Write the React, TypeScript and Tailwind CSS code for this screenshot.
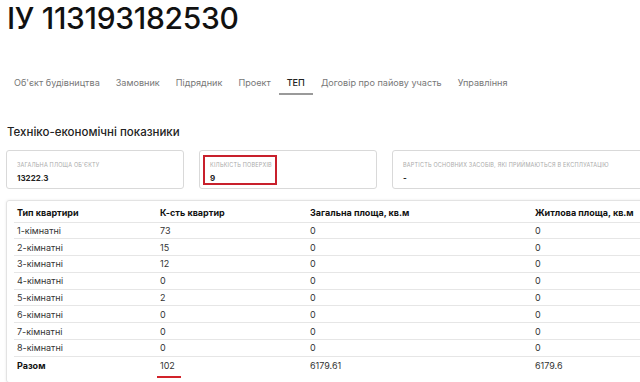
import React from "react";

const TABS = [
  "Об'єкт будівництва",
  "Замовник",
  "Підрядник",
  "Проект",
  "ТЕП",
  "Договір про пайову участь",
  "Управління",
];

const ROWS: [string, string, string, string][] = [
  ["1-кімнатні", "73", "0", "0"],
  ["2-кімнатні", "15", "0", "0"],
  ["3-кімнатні", "12", "0", "0"],
  ["4-кімнатні", "0", "0", "0"],
  ["5-кімнатні", "2", "0", "0"],
  ["6-кімнатні", "0", "0", "0"],
  ["7-кімнатні", "0", "0", "0"],
  ["8-кімнатні", "0", "0", "0"],
];

export default function App() {
  return (
    <div className="w-[640px] h-[382px] overflow-hidden bg-white font-['Inter',sans-serif] text-[#222]">
      <div className="w-[820px] pl-[6px]">
        <h1 className="text-[30px] leading-[36px] font-medium tracking-[-0.3px] text-[#111] pl-[1px]">
          ІУ 113193182530
        </h1>

        <nav className="flex mt-[36px] h-[23px]">
          {TABS.map((t) => (
            <div
              key={t}
              className={
                "px-[8px] text-[9.1px] leading-[21px] whitespace-nowrap " +
                (t === "ТЕП"
                  ? "text-[#222] font-medium border-b-2 border-[#9a9a9a]"
                  : "text-[#777]")
              }
            >
              {t}
            </div>
          ))}
        </nav>

        <h2 className="mt-[29px] text-[11.5px] leading-[16px] font-medium text-[#222] pl-[1px]">
          Техніко-економічні показники
        </h2>

        <div className="flex gap-[15px] mt-[10px]">
          <Card label="Загальна площа об'єкту" value="13222.3" className="w-[178px]" />
          <Card label="Кількість поверхів" value="9" className="w-[178px]" highlight />
          <Card
            label="Вартість основних засобів, які приймаються в експлуатацію"
            value="-"
            className="w-[300px]"
          />
        </div>

        <div className="mt-[11px] border border-[#e3e3e3] rounded-[3px] shadow-[0_0_3px_rgba(0,0,0,0.08)] pl-[7px] pr-[8px] pt-[3px] pb-[8px]">
          <table className="border-collapse text-[9px] text-[#333]">
            <thead>
              <tr className="border-b border-[#e6e6e6]">
                <Th w="w-[143px]">Тип квартири</Th>
                <Th w="w-[150px]">К-сть квартир</Th>
                <Th w="w-[225px]">Загальна площа, кв.м</Th>
                <Th w="w-[260px]">Житлова площа, кв.м</Th>
              </tr>
            </thead>
            <tbody>
              {ROWS.map((r) => (
                <tr key={r[0]} className="border-b border-[#e6e6e6]">
                  {r.map((c, i) => (
                    <td key={i} className="pl-[3px] p-0 h-[16.8px] leading-[15px]">
                      {c}
                    </td>
                  ))}
                </tr>
              ))}
              <tr>
                <td className="pl-[3px] h-[18px] font-bold text-[#111]">Разом</td>
                <td className="pl-[3px]">
                  <span className="relative">
                    102
                    <span className="absolute left-[-3px] right-[-6px] top-[16px] h-[2px] bg-[#d2232a]" />
                  </span>
                </td>
                <td className="pl-[3px]">6179.61</td>
                <td className="pl-[3px]">6179.6</td>
              </tr>
            </tbody>
          </table>
        </div>
      </div>
    </div>
  );
}

const Th = ({ children, w }: { children: React.ReactNode; w: string }) => {
  return (
    <th className={"text-left pl-[3px] h-[18px] font-bold text-[#111] " + w}>
      {children}
    </th>
  );
};

type CardProps = {
  label: string;
  value: string;
  className?: string;
  highlight?: boolean;
};

const Card = ({ label, value, className, highlight }: CardProps) => {
  return (
    <div
      className={
        "flex items-start h-[39px] border border-[#d9d9d9] rounded-[3px] pl-[3px] pt-[4px] " +
        (className ?? "")
      }
    >
      <div
        className={
          "flex flex-col px-[5px] pt-[4px] h-[30px] border-2 " +
          (highlight ? "border-[#c8202c] w-[74px]" : "border-transparent")
        }
      >
        <div className="text-[5.5px] leading-[8px] uppercase tracking-[0.2px] text-[#aaa] whitespace-nowrap">
          {label}
        </div>
        <div className="mt-[4px] text-[8px] leading-[10px] font-bold text-[#222]">
          {value}
        </div>
      </div>
    </div>
  );
};
